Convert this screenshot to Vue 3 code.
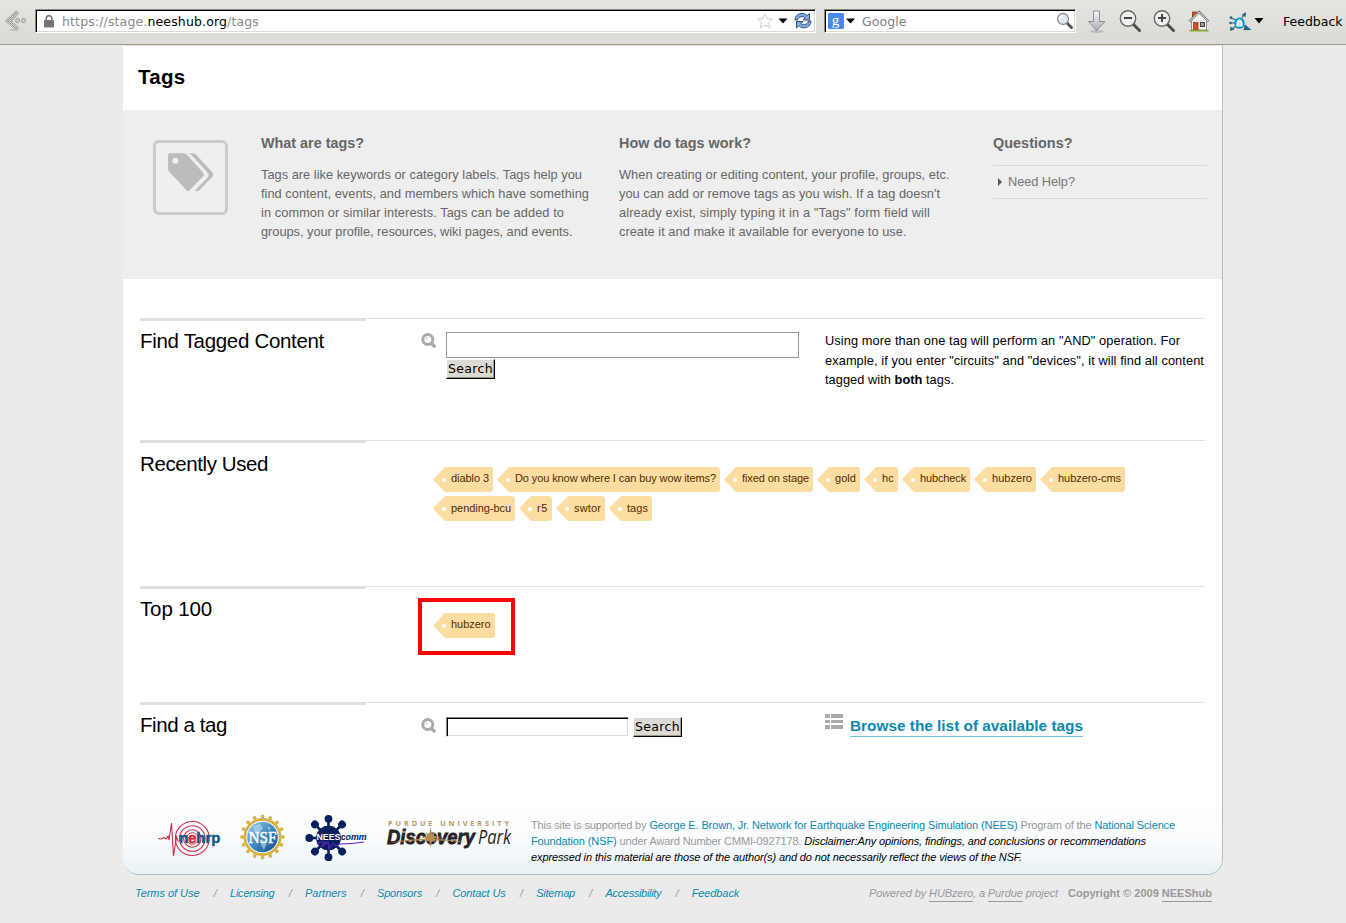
<script setup>
// Spreads the letters of an element so that its text spans a given width.
const vFit = {
  mounted(el, { value }) {
    const natural = el.getBoundingClientRect().width
    el.style.letterSpacing = `${(value - natural) / el.textContent.length}px`
  },
}

const whatLines = [
  ['Tags are like keywords or category labels. Tags help you', 321],
  ['find content, events, and members which have something', 328],
  ['in common or similar interests. Tags can be added to', 303],
  ['groups, your profile, resources, wiki pages, and events.', 311.5],
]
const howLines = [
  ['When creating or editing content, your profile, groups, etc.', 330.5],
  ["you can add or remove tags as you wish. If a tag doesn't", 321],
  ['already exist, simply typing it in a "Tags" form field will', 311],
  ['create it and make it available for everyone to use.', 287.5],
]
const recent = [
  [
    ['diablo 3', 38], ['Do you know where I can buy wow items?', 201], ['fixed on stage', 67],
    ['gold', 21], ['hc', 12], ['hubcheck', 46], ['hubzero', 40], ['hubzero-cms', 63],
  ],
  [['pending-bcu', 60], ['r5', 11], ['swtor', 27], ['tags', 21]],
]
const links = [
  ['Terms of Use', 64.5], ['Licensing', 44.5], ['Partners', 41.5], ['Sponsors', 45],
  ['Contact Us', 53.2], ['Sitemap', 38.8], ['Accessibility', 55.7], ['Feedback', 47.5],
]
const spokes = [0, 45, 135, 180, 225, 270, 315]
const teeth = Array.from({ length: 16 }, (_, i) => i * 22.5)
</script>

<template>
  <div class="screen">
    <header class="toolbar">
      <svg class="back" width="24" height="24" viewBox="0 0 24 24">
        <defs>
          <pattern id="dots" width="2" height="2" patternUnits="userSpaceOnUse">
            <rect width="2" height="2" fill="#d6d5d1" />
            <rect width="1" height="1" fill="#8d8c88" />
            <rect x="1" y="1" width="1" height="1" fill="#a3a29e" />
          </pattern>
        </defs>
        <path d="M12 2l3 2-7 8 7 7-3 2L1 12z" fill="url(#dots)" stroke="#aaa9a5" stroke-width=".7" />
        <circle cx="13.500" cy="11.500" r="2" fill="#cfcecb" stroke="#999894" />
        <circle cx="19.500" cy="11.500" r="2" fill="#cfcecb" stroke="#999894" />
        <ellipse cx="10" cy="21" rx="5" ry="1" fill="#aaa" opacity=".5" />
      </svg>

      <div class="field url">
        <svg width="10" height="13" viewBox="0 0 10 13">
          <path d="M2.200 6V3.500a2.800 2.800 0 0 1 5.600 0V6" fill="none" stroke="#777" stroke-width="1.700" />
          <rect y="5" width="10" height="7.500" rx="1" fill="#757575" />
        </svg>
        <span class="address"><span v-fit="197">https://stage.<b>neeshub.org</b>/tags</span></span>
        <svg class="star" width="16" height="16" viewBox="0 0 16 16">
          <path d="M8 .8l2.200 5 5.200.3-4 3.500 1.400 5.300L8 12l-4.800 2.900 1.400-5.300-4-3.500 5.200-.3z" fill="#fff" stroke="#cdcdcd" stroke-width="1" />
        </svg>
        <svg class="caret" width="10" height="6" viewBox="0 0 10 6"><path d="M.5 .5h9L5 5.500z" /></svg>
        <svg class="reload" width="18" height="18" viewBox="0 0 18 18">
          <g stroke="#1d4377" stroke-width=".9" fill="#83abd8" stroke-linejoin="round">
            <path d="M1 8C1 3.500 4.500 1.500 8 1.500c2.400 0 4 .8 5.200 2L15.500 1.500V8H9l2.200-2.300C9.500 4 4.500 4 3.500 8z" />
            <path d="M17 9c0 4.500-3.500 6.800-7 6.800-2.400 0-4-.8-5.200-2L2.500 16V9.500H9L6.800 11.800c1.700 1.700 6.700 1.400 7.700-2.800z" />
          </g>
        </svg>
      </div>

      <div class="field engine">
        <svg width="16" height="16" viewBox="0 0 16 16">
          <rect width="16" height="16" rx="1.500" fill="#4a86ec" />
          <text x="3.800" y="11.500" font-family="Liberation Serif, serif" font-size="15" fill="#fff">g</text>
        </svg>
        <svg class="pick" width="9" height="6" viewBox="0 0 9 6"><path d="M0 .5h9L4.500 5.500z" /></svg>
        <span class="google"><span v-fit="44.5">Google</span></span>
        <svg class="lens" width="18" height="18" viewBox="0 0 18 18">
          <path d="M10.500 10.500l5 5" stroke="#555" stroke-width="3" stroke-linecap="round" />
          <circle cx="7" cy="7" r="5.500" fill="#dce8f0" stroke="#8a8a8a" stroke-width="1.300" />
          <path d="M4 7a3 3 0 0 1 3-3" fill="none" stroke="#fff" stroke-width="1.500" />
        </svg>
      </div>

      <svg class="down" width="20" height="24" viewBox="0 0 20 24">
        <defs>
          <linearGradient id="silver" x1="0" y1="0" x2="0" y2="1">
            <stop offset="0" stop-color="#f5f6f6" /><stop offset="1" stop-color="#a9b0b5" />
          </linearGradient>
        </defs>
        <ellipse cx="10" cy="21.500" rx="7" ry="1.500" fill="#999" opacity=".5" />
        <path d="M6.500 1h6v10.500H18L9.500 20.500 1.500 11.500h5z" fill="url(#silver)" stroke="#8b8f92" />
      </svg>
      <svg class="zoomer" width="23" height="23" viewBox="0 0 23 23">
        <path d="M14 14l6.500 6.500" stroke="#4d4f50" stroke-width="3" stroke-linecap="round" />
        <circle cx="9" cy="8.500" r="7.700" fill="#eff0ee" stroke="#666867" stroke-width="1.400" />
        <path d="M5 8h8" stroke="#444" stroke-width="2" />
      </svg>
      <svg class="zoomer" width="23" height="23" viewBox="0 0 23 23">
        <path d="M14 14l6.500 6.500" stroke="#4d4f50" stroke-width="3" stroke-linecap="round" />
        <circle cx="9" cy="8.500" r="7.700" fill="#eff0ee" stroke="#666867" stroke-width="1.400" />
        <path d="M5 8h8M9 4v8" stroke="#444" stroke-width="2" />
      </svg>
      <svg class="home" width="22" height="22" viewBox="0 0 22 22">
        <path d="M4.500 7V2h4v2" fill="#d9532c" stroke="#7c2b16" stroke-width=".8" />
        <path d="M3.500 10.500L11 3l7.500 7.500v9.500h-15z" fill="#f3f3f1" stroke="#777" stroke-width=".8" />
        <path d="M5 11h12M5 13h12M5 15h12" stroke="#d4d4d2" stroke-width=".7" />
        <path d="M1.500 11.500L11 2l9.500 9.500" fill="none" stroke="#666" stroke-width="2.400" />
        <path d="M1.700 11.300L11 2.200l9.300 9.100" fill="none" stroke="#ddd" stroke-width="1.100" />
        <rect x="5.500" y="12.500" width="4.500" height="8" fill="#d5501d" stroke="#8d2e10" stroke-width=".7" />
        <rect x="12.500" y="12.500" width="4" height="4" fill="#9a9c9b" stroke="#444" />
        <path d="M1.500 20.700h19" stroke="#82aa29" stroke-width="1.500" />
      </svg>
      <svg class="spider" width="24" height="22" viewBox="0 0 24 22">
        <g stroke="#28647f" stroke-width="1.200" fill="none">
          <path d="M2 7l5 2M1 12h5M3 18l4-3M14 14l6 4M12.500 7.500l3.500-5" />
        </g>
        <path d="M12.500 4l4.500-3-.3 5zM16 13.500l6.500 5.500-8 .3zM1.500 15.500l4 3-4.500 1.500z" fill="#28647f" />
        <circle cx="2" cy="6.500" r="1.300" fill="#28647f" /><circle cx="1.500" cy="12" r="1.300" fill="#28647f" />
        <ellipse cx="10.500" cy="12.200" rx="5.200" ry="5.600" fill="#0a94c9" />
        <path d="M7.500 15.500c-.5-4.500.8-7 3-7s3.500 2.500 3 7z" fill="#fff" />
        <path d="M9.700 11.500v4h1.700v-4z" fill="#b9dcea" />
      </svg>
      <svg class="spider-caret" width="10" height="6" viewBox="0 0 10 6"><path d="M.5 0h9L5 5.500z" /></svg>
      <span class="feedback"><span v-fit="59.5">Feedback</span></span>
    </header>

    <main class="page">
      <h1><span v-fit="47.500">Tags</span></h1>

      <section class="banner">
        <svg class="badge" width="75" height="75" viewBox="0 0 75 75">
          <rect x="1.500" y="1.500" width="72" height="72" rx="4.500" fill="#efefef" stroke="#cbcbcb" stroke-width="3" />
          <g fill="#bcbcbc">
            <path fill-rule="evenodd" d="M17 13.300h13.500q2 0 3.500 1.500L50 32.500q1.500 2.200 0 4L36.500 50.200q-1.500 1.600-3 0L16.500 32q-1.500-1.500-1.500-3.500V15.300q0-2 2-2zM22.400 17.700a3 3 0 1 0 0 6 3 3 0 0 0 0-6z" />
            <path d="M34.500 13.300h5q2.200 0 3.700 1.500L59.500 32.500q1.500 2.200 0 4L46.500 50q-2 2-4.500.5l12.500-13q2-2.500 0-5L38.500 15q-1.500-1.400-4-1.700z" />
          </g>
        </svg>
        <div class="what">
          <h3><span v-fit="103">What are tags?</span></h3>
          <p><span v-for="l in whatLines" :key="l[0]" class="line"><span v-fit="l[1]">{{ l[0] }}</span></span></p>
        </div>
        <div class="how">
          <h3><span v-fit="132">How do tags work?</span></h3>
          <p><span v-for="l in howLines" :key="l[0]" class="line"><span v-fit="l[1]">{{ l[0] }}</span></span></p>
        </div>
        <div class="questions">
          <h3><span v-fit="79.5">Questions?</span></h3>
          <a class="help">
            <svg width="4" height="8" viewBox="0 0 4 8"><path d="M0 0l4 4-4 4z" fill="#555" /></svg>
            <span v-fit="67">Need Help?</span>
          </a>
        </div>
      </section>

      <section class="row find">
        <h2><span v-fit="184">Find Tagged Content</span></h2>
        <div class="body search">
          <svg width="16" height="16" viewBox="0 0 16 16">
            <path d="M10.500 10.500l3.700 3.700" stroke="#aaa" stroke-width="3.200" />
            <circle cx="6.800" cy="6.500" r="5" fill="#fff" stroke="#aaa" stroke-width="3" />
            <path d="M4.800 6.700a2 2 0 0 1 2-2" fill="none" stroke="#bbb" />
          </svg>
          <div>
            <div class="wide-input"></div>
            <button><span v-fit="45">Search</span></button>
          </div>
        </div>
        <p class="aside">
          <span class="line"><span v-fit="355">Using more than one tag will perform an "AND" operation. For</span></span>
          <span class="line"><span v-fit="379">example, if you enter "circuits" and "devices", it will find all content</span></span>
          <span class="line"><span v-fit="129">tagged with <strong>both</strong> tags.</span></span>
        </p>
      </section>

      <section class="row recent">
        <h2><span v-fit="128">Recently Used</span></h2>
        <div class="body tags">
          <div v-for="(line, i) in recent" :key="i" class="tag-line">
            <a v-for="t in line" :key="t[0]" class="tag"><span v-fit="t[1]">{{ t[0] }}</span></a>
          </div>
        </div>
      </section>

      <section class="row top">
        <h2><span v-fit="72">Top 100</span></h2>
        <div class="body">
          <div class="mark"><a class="tag"><span v-fit="39.5">hubzero</span></a></div>
        </div>
      </section>

      <section class="row lookup">
        <h2><span v-fit="87">Find a tag</span></h2>
        <div class="body search">
          <svg width="16" height="16" viewBox="0 0 16 16">
            <path d="M10.500 10.500l3.700 3.700" stroke="#aaa" stroke-width="3.200" />
            <circle cx="6.800" cy="6.500" r="5" fill="#fff" stroke="#aaa" stroke-width="3" />
            <path d="M4.800 6.700a2 2 0 0 1 2-2" fill="none" stroke="#bbb" />
          </svg>
          <div class="field small-input"></div>
          <button><span v-fit="45">Search</span></button>
        </div>
        <div class="aside browse">
          <svg width="18" height="15" viewBox="0 0 18 15" fill="#aaa">
            <path d="M0 0h5v4H0zM6 0h12v4H6zM0 6h5v3H0zM6 6h12v3H6zM0 11h5v4H0zM6 11h12v4H6z" />
          </svg>
          <a><span v-fit="233">Browse the list of available tags</span></a>
        </div>
      </section>

      <section class="sponsors">
        <svg class="logos" width="370" height="50" viewBox="155 812 370 50">
          <defs>
            <linearGradient id="globe" x1="0" y1="0" x2="1" y2="1">
              <stop offset="0" stop-color="#9cc8e6" /><stop offset=".5" stop-color="#4289c2" /><stop offset="1" stop-color="#12498c" />
            </linearGradient>
            <linearGradient id="gold" gradientUnits="userSpaceOnUse" x1="0" y1="815" x2="0" y2="860">
              <stop offset="0" stop-color="#e6cf8c" /><stop offset="1" stop-color="#cca317" />
            </linearGradient>
          </defs>
          <g fill="none" stroke="#cc3049" stroke-width="1.100">
            <circle cx="192.300" cy="838.500" r="17" />
            <circle cx="192.300" cy="838.500" r="12.800" />
            <circle cx="192.300" cy="838.500" r="8.700" />
            <path d="M158 838.500l3 .5 3-1.500 2 1.500 2-3 1 4 2.500-17 2 33 3-19 1.500 4h3" />
          </g>
          <circle cx="192.300" cy="838.500" r="7" fill="#fff" />
          <circle cx="192.300" cy="838.500" r="5.800" fill="none" stroke="#d92b3e" />
          <g font-family="Liberation Sans, Arial, sans-serif" font-size="15.500" font-weight="bold" fill="#135a8b" stroke="#135a8b" stroke-width=".5">
            <text x="179" y="843">n</text>
            <text x="188" y="843" fill="#d92b3e" stroke="#d92b3e">e</text>
            <text x="196.300" y="843" textLength="24" lengthAdjust="spacingAndGlyphs">hrp</text>
          </g>

          <circle cx="262.500" cy="837" r="17.600" fill="none" stroke="#d2ae40" stroke-width="2.600" />
          <g fill="#d8b64e">
            <g v-for="a in teeth" :key="a" :transform="`rotate(${a} 262.5 837)`">
              <circle cx="262.500" cy="816.500" r="1.900" />
              <path d="M261.500 817h2l1 2.500h-4z" />
            </g>
          </g>
          <circle cx="262.500" cy="837" r="15.300" fill="url(#globe)" />
          <path d="M253 826l7-2 3 4-3 4-2 5-4-5zM262 839l5 3-3 8-3-5zM267 826l4 2-2 3z" fill="#c5dfee" opacity=".6" />
          <text x="248.500" y="842.500" font-family="Liberation Serif, serif" font-size="17" fill="#fff" stroke="#fff" stroke-width=".5" textLength="28" lengthAdjust="spacingAndGlyphs">NSF</text>

          <g fill="#06205c" stroke="#06205c">
            <circle cx="328.500" cy="838" r="12" />
            <g v-for="a in spokes" :key="a" :transform="`rotate(${a} 328.5 838)`">
              <path d="M328.500 838V820" stroke-width="2.600" />
              <circle cx="328.500" cy="818.800" r="3.900" stroke="none" />
            </g>
          </g>
          <g font-family="Liberation Sans, Arial, sans-serif" font-weight="bold" font-size="9.500">
            <text x="316.500" y="839.800" fill="#fff" textLength="24" lengthAdjust="spacingAndGlyphs">NEES</text>
            <text x="340.700" y="839.800" font-style="italic" fill="#06205c" textLength="26" lengthAdjust="spacingAndGlyphs">comm</text>
          </g>
          <path d="M317 844q3-3 8-2l-4 5 7-5 1 7 4-6 3 3 4-2q12 0 24-2" fill="none" stroke="#5b24c4" stroke-width="1.100" />

          <g font-family="Open Sans, Noto Sans, sans-serif">
            <text x="388" y="825.800" font-size="7.300" font-weight="bold" fill="#b99765" textLength="121">PURDUE UNIVERSITY</text>
            <g font-family="Liberation Sans, Arial, sans-serif">
              <text x="387" y="844" font-size="20.500" font-weight="bold" font-style="italic" fill="#272324" stroke="#272324" stroke-width=".8" textLength="88" lengthAdjust="spacingAndGlyphs">Discovery</text>
            </g>
            <text x="478" y="844" font-size="20.500" font-style="italic" fill="#272324" textLength="33" lengthAdjust="spacingAndGlyphs">Park</text>
          </g>
          <path d="M388 843.500q35-9 80-1q-45-5-80 1z" fill="#b68e52" />
          <path d="M430.500 826.500l1.300 7.500 3.700-1.900-1.900 3.700 7 1.500-7 1.500 1.900 3.700-3.700-1.900-1.300 7.500-1.300-7.500-3.700 1.900 1.900-3.700-7-1.500 7-1.500-1.900-3.700 3.700 1.900z" fill="#b98f50" />
        </svg>
        <p>
          <span class="line"><span v-fit="644">This site is supported by <a>George E. Brown, Jr. Network for Earthquake Engineering Simulation (NEES)</a> Program of the <a>National Science</a></span></span>
          <span class="line"><span v-fit="615"><a>Foundation (NSF)</a> under Award Number CMMI-0927178. <em>Disclaimer:Any opinions, findings, and conclusions or recommendations</em></span></span>
          <span class="line"><span v-fit="491"><em>expressed in this material are those of the author(s) and do not necessarily reflect the views of the NSF.</em></span></span>
        </p>
      </section>
    </main>

    <footer>
      <nav>
        <template v-for="(l, i) in links" :key="l[0]">
          <i v-if="i" class="slash">/</i>
          <a><span v-fit="l[1]">{{ l[0] }}</span></a>
        </template>
      </nav>
      <div class="credit">
        <em><span v-fit="189">Powered by <u>HUBzero</u>, a <u>Purdue</u> project</span></em>
        <strong><span v-fit="144">Copyright © 2009 <u>NEEShub</u></span></strong>
      </div>
    </footer>
  </div>
</template>

<style>
body { background: #ebebeb; overflow: hidden; }
</style>

<style scoped>
* { box-sizing: border-box; }
.screen {
  width: 1346px; height: 923px; overflow: hidden; background: #ebebeb; color: #000;
  font: 12.8px/19px "Liberation Sans", Arial, sans-serif;
}
span { white-space: nowrap; }
h1 span, h2 span, h3 span, .line > span, .help span, .tag span, button span, a > span,
.address span, .google span, .feedback span, .credit span { display: inline-block; }
h1, h2, h3, p { margin: 0; }
svg { display: block; flex: none; }

.toolbar {
  display: flex; align-items: flex-start; height: 45px; padding: 9px 0 0 4px;
  background: linear-gradient(#e5e4e0, #dbdad5); border-bottom: 1px solid #9d9788;
  font: 12.5px/24px "DejaVu Sans", sans-serif;
}
.back { margin-right: 7px; }
.field {
  display: flex; align-items: center; height: 24px; background: #fff;
  border: 1px solid; border-color: #8a877f #fff #fff #8a877f;
  box-shadow: inset 1px 1px #000, inset -1px -1px #dcdad5;
}
.url { width: 781px; padding-left: 8px; }
.address { margin-left: 8px; padding-top: 1px; flex: 1; color: #888; }
.address b { font-weight: normal; color: #000; }
.star { margin-right: 5px; }
.caret { margin-right: 6px; }
.reload { margin-right: 3px; }
.engine { width: 252px; margin-left: 8px; padding-left: 3px; }
.pick { margin: 0 7px 0 2px; }
.google { flex: 1; padding-top: 1px; color: #808080; }
.lens { margin-right: 1px; }
.down { margin: 1px 0 0 11px; }
.zoomer { margin: 1px 0 0 11px; }
.down + .zoomer { margin-left: 12px; }
.home { margin: 1px 0 0 12px; }
.spider { margin: 2px 0 0 19px; }
.spider-caret { margin: 9px 0 0 1px; }
.feedback { margin-left: 19px; padding-top: 1px; }

.page {
  display: flex; flex-direction: column; width: 1100px; height: 830px; margin-left: 123px;
  background: #fff; border-right: 1px solid #bbb; border-bottom: 1px solid #bbb;
  border-top: 1px solid #e9e6df; border-radius: 0 0 16px 16px; overflow: hidden;
}
h1 { height: 64px; padding: 19px 0 0 15px; font-size: 20.5px; line-height: 23px; }

.banner { display: flex; height: 169px; padding: 24px 15px 0 30px; background: #eee; color: #666; }
.badge { margin: 6px 33px 0 0; }
h3 { font-size: 14.4px; line-height: 18px; }
.banner p { margin-top: 13px; }
.line { display: block; }
.what { width: 358px; }
.how { width: 374px; }
.questions { flex: 1; }
.help {
  display: flex; align-items: center; gap: 6px; height: 34px; margin-top: 13px; padding-left: 5px;
  border: 1px solid #d9d9d9; border-width: 1px 0; color: #777;
}
.help span { margin-bottom: 2px; }

.row {
  display: grid; grid-template-columns: 226px 1fr 380px; flex: none;
  margin: 0 17px; border-top: 1px solid #e0e0e0;
}
.find { height: 122px; margin-top: 39px; }
.recent { height: 146px; grid-template-columns: 226px 1fr; }
.top { height: 116px; grid-template-columns: 226px 1fr; }
.lookup { height: 106px; }
h2 { height: 36px; padding-top: 8px; border-top: 2px solid #e0e0e0; font-weight: normal; font-size: 20.5px; line-height: 23px; }
.recent h2 { padding-top: 9px; }
.body { padding-left: 55px; }
.search { display: flex; align-items: flex-start; padding-top: 14px; }
.search > svg { margin-right: 9px; }
.lookup .search > svg { margin-top: 1px; }
.wide-input { width: 353px; height: 26px; margin: -1px 0 1px; border: 1px solid #999; }
button {
  display: flex; justify-content: center; width: 49px; height: 20px; padding: 0; background: #dcdad5;
  border: 1px solid; border-color: #fff #000 #000 #fff; box-shadow: inset -1px -1px #9d9788;
  font: 12.5px/18px "DejaVu Sans", sans-serif; color: #000;
}
.aside { padding-top: 12px; line-height: 19.5px; }
.small-input { width: 183px; height: 20px; margin-right: 4px; }
.browse { display: flex; padding-top: 11px; }
.browse a { height: 20px; margin: 3px 0 0 7px; border-bottom: 1px solid #6cc5da; color: #0b89ad; font: bold 15.4px/18px "Liberation Sans", Arial, sans-serif; }

.tags { padding: 26px 0 0 67px; }
.tag-line { display: flex; gap: 4px; height: 29px; }
.tag {
  position: relative; display: block; height: 25px; padding: 0 4px 0 18px; border-radius: 3px;
  background: #fbdda2; color: #552b00; font-size: 11px; line-height: 23px;
  clip-path: polygon(0 50%, 12px 0, 100% 0, 100% 100%, 12px 100%);
}
.tag-line + .tag-line .tag { line-height: 25px; }
.tag::before {
  content: ""; position: absolute; left: 9px; top: 11px; width: 4px; height: 4px;
  border-radius: 50%; background: #fff;
}
.top .body { padding: 11px 0 0 52px; }
.mark { width: 97px; height: 57px; padding: 11px 16px 0 11px; border: 4px solid #f00; }

.sponsors {
  display: flex; flex: 1; margin-top: -2px; padding: 6px 0 0 32px;
  background: linear-gradient(#fff, #fbfcfe 45%, #e9f2f6);
  font-size: 11px; line-height: 16px; color: #999;
}
.sponsors p { margin: 5px 0 0 6px; }
.sponsors a { color: #0b89ad; }
.sponsors em { color: #000; }

footer {
  display: flex; justify-content: space-between; margin-top: 10px; padding: 0 134px 0 135px;
  font-size: 11px; line-height: 16px; color: #999;
}
nav { display: flex; font-style: italic; }
nav a { color: #0b89ad; }
.slash { width: 30.5px; padding-left: 1px; text-align: center; }
.credit { display: flex; gap: 10px; }
u { text-decoration: none; padding-bottom: 2px; border-bottom: 1px solid #999; }
</style>
